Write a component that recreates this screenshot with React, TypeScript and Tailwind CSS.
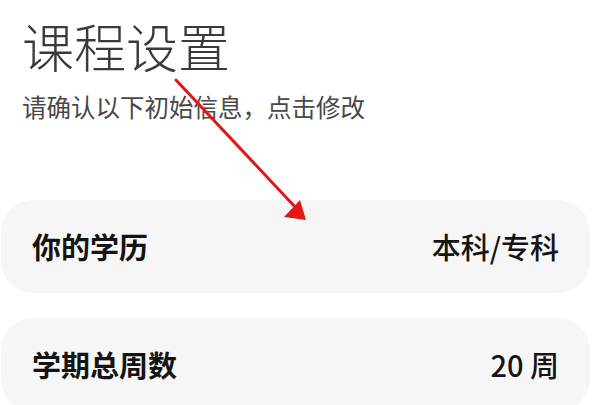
import React from 'react'

const font = { fontFamily: '"Noto Sans CJK SC", "Noto Sans", sans-serif' }

function Row({ label, value }: { label: string; value: string }) {
  return (
    <div className="flex h-[93px] items-center justify-between rounded-[32px] bg-[#f6f6f6] pl-[31px] pr-[31px]">
      <span className="text-[29px] font-bold text-[#141414]">{label}</span>
      <span className="text-[29px] font-medium text-[#141414]">{value}</span>
    </div>
  )
}

export default function App() {
  return (
    <div className="relative h-[405px] w-[612px] overflow-hidden bg-white" style={font}>
      <div className="pl-[22px] pt-[12px]">
        <h1 className="text-[52px] font-light leading-[68px] text-[#3a3a3a]">课程设置</h1>
        <p className="mt-[11px] text-[24.5px] leading-[32px] text-[#484848]">请确认以下初始信息，点击修改</p>
      </div>
      <div className="mr-[22px] ml-[1px] mt-[77px] flex flex-col gap-[25px]">
        <Row label="你的学历" value="本科/专科" />
        <Row label="学期总周数" value="20 周" />
      </div>
      <svg className="pointer-events-none absolute left-0 top-0" width="612" height="405" viewBox="0 0 612 405">
        <line x1="176" y1="80" x2="297" y2="209" stroke="#e01818" strokeWidth="3" strokeLinecap="round" />
        <polygon points="306,220 284,217 300,200" fill="#e01818" />
      </svg>
    </div>
  )
}
